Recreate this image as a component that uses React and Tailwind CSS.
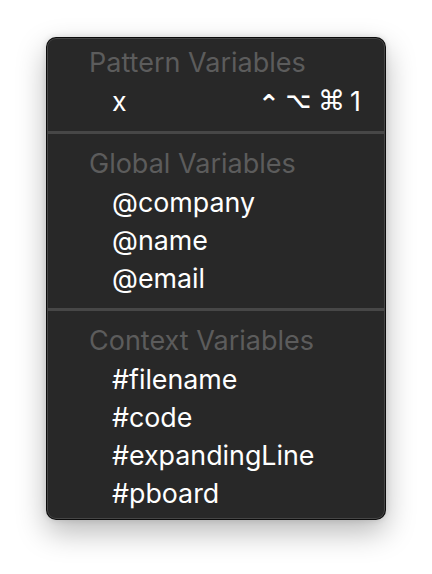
import React from "react";

const font = { fontFamily: 'Inter, "DejaVu Sans", sans-serif' };
const dj = { fontFamily: '"DejaVu Sans", sans-serif' };

function Header({ children }) {
  return (
    <div className="h-[38px] leading-[38px] pl-[42px] text-[27px] text-[#5c5c5c] whitespace-nowrap">
      {children}
    </div>
  );
}

function Item({ children, shortcut }) {
  return (
    <div className="h-[38px] leading-[38px] pl-[65px] pr-[24px] text-[26.8px] text-white flex items-center justify-between whitespace-nowrap">
      <span>{children}</span>
      {shortcut}
    </div>
  );
}

function Sep() {
  return (
    <div className="h-[25px] flex items-center">
      <div className="h-[3px] w-full bg-[#474747]" />
    </div>
  );
}

export default function App() {
  return (
    <div className="min-h-[574px] w-[432px] bg-white pt-[37px] pl-[46px]" style={font}>
      <div className="w-[340px] h-[483px] rounded-[10px] bg-[#282828] border border-black/70 shadow-[0_12px_30px_rgba(0,0,0,0.28),0_0_6px_rgba(0,0,0,0.12),inset_0_0_0_1px_rgba(255,255,255,0.14)] pt-[6px] pb-[8px] overflow-hidden">
        <Header>Pattern Variables</Header>
        <Item
          shortcut={
            <span className="flex items-center h-[38px]">
              <span style={dj} className="text-[26px] leading-[38px] font-bold mt-[5px]">⌃</span>
              <span style={dj} className="text-[22px] leading-[38px] font-bold ml-[6px]">⌥</span>
              <span style={dj} className="text-[27px] leading-[38px] ml-[7px]">⌘</span>
              <span className="ml-[5px]">1</span>
            </span>
          }
        >
          x
        </Item>
        <Sep />
        <Header>Global Variables</Header>
        <Item>@company</Item>
        <Item>@name</Item>
        <Item>@email</Item>
        <Sep />
        <Header>Context Variables</Header>
        <Item>#filename</Item>
        <Item>#code</Item>
        <Item>#expandingLine</Item>
        <Item>#pboard</Item>
      </div>
    </div>
  );
}
